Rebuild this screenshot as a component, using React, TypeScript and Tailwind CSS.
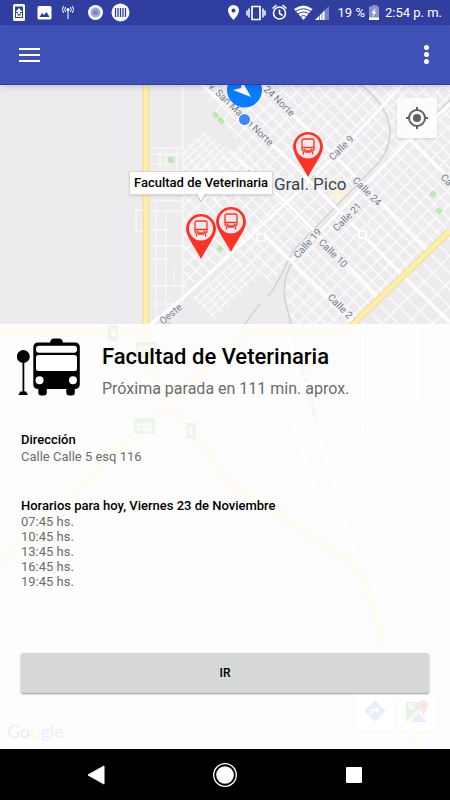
import React from "react";

const times = ["07:45 hs.", "10:45 hs.", "13:45 hs.", "16:45 hs.", "19:45 hs."];

const avenues = [
  "M150 325 183 298 300 190 350 141 402 85",
  "M292 260 410 139 450 104",
  "M203 85 260 134 290 161 403 276 450 322",
  "M262 85 343 164 427 251",
  "M240 160 290 206 378 297",
  "M265 235 290 260 353 321",
  "M410 139 450 179",
];

const highways = [
  "M146 85V324L145 345Q150 375 168 402",
  "M0 333H135L146 330",
  "M168 402 0 565",
  "M168 402 225 352Q240 334 255 332L335 332Q350 330 358 319L450 231",
  "M168 402 222 472Q226 481 235 487L345 559Q358 566 362 578L388 655 420 749",
];

const streetLabels: [number, number, number, string][] = [
  [208, 87, 44, "v. San Martín Norte"],
  [263, 90, 44, "24 Norte"],
  [333, 161, -45, "Calle 9"],
  [352, 181, 45, "Calle 24"],
  [337, 232, -45, "Calle 21"],
  [298, 259, -48, "Calle 19"],
  [318, 243, 45, "Calle 10"],
  [327, 298, 45, "Calle 2"],
  [440, 178, 45, "Ca"],
  [163, 325, -40, "Oeste"],
];

const parks = [
  "M215 111l4 4-3 4-4-4z",
  "M220 116l5 5-3 4-5-5z",
  "M168 157h6v6h-6z",
  "M220 245l4 4-4 4-4-4z",
  "M249 169l4 4h-8z",
  "M433 190l4 4-4 4-4-4z",
  "M439 207l4 4-4 4-4-4z",
  "M314 175l4 4-4 4-4-4z",
  "M168 321l4 4-4 4-4-4z",
];

function MapCanvas() {
  return (
    <svg
      className="absolute inset-0 h-full w-full"
      viewBox="0 85 450 664"
      preserveAspectRatio="xMidYMin slice"
      fontFamily="Roboto, sans-serif"
      aria-hidden="true"
    >
      <defs>
        <pattern id="blocks" width="11" height="9" patternUnits="userSpaceOnUse" patternTransform="translate(290 160) rotate(45)">
          <path d="M0 .7H11M.7 0V9" stroke="#fcfbfc" strokeWidth="1.400" />
        </pattern>
        <pattern id="small" width="9" height="6" patternUnits="userSpaceOnUse" patternTransform="translate(230 150) rotate(-43)">
          <path d="M0 .7H9M.7 0V6" stroke="#fcfbfc" strokeWidth="1.200" />
        </pattern>
        <pattern id="wide" width="18" height="12" patternUnits="userSpaceOnUse" patternTransform="translate(403 276) rotate(45)">
          <path d="M0 .7H18M.7 0V12" stroke="#fcfbfc" strokeWidth="1.400" />
        </pattern>
      </defs>
      <rect y="85" width="450" height="664" fill="#eeebee" />

      <path d="M196 85H362Q392 115 389 152L300 245 290 258 273 284 262 275 230 260 183 290V172L215 160 240 145 228 128z" fill="url(#blocks)" />
      <path d="M183 152 203 131 240 155 250 172 215 205 183 175z" fill="url(#small)" />
      <path d="M192 298 236 257 262 275 215 320z" fill="url(#small)" />
      <path d="M362 85H450V236L355 324H290L284 290 300 250 389 158Q394 110 362 85z" fill="url(#blocks)" />
      <path d="M450 236V324H362z" fill="url(#wide)" />
      <path d="M323 180l14-6 14 16-6 12-8 2z" fill="#fbf1dc" opacity=".8" />

      <g fill="none" stroke="#f8f7f8" strokeWidth="1.500">
        <path d="M183 85V304M150 148H183M150 154H183M150 164H170M150 171H183M150 201H183M150 211H183M150 230H168M150 246H183M150 259H170M150 286H183M150 304H180M160 148V171M166 148V180M177 148V171M156 201V320M166 211V320M174 268V286" />
        <path d="M150 210H136V231H150" />
      </g>
      <path d="M257 234h8v7h-8z" fill="#eeebee" stroke="#fff" strokeWidth="1.500" />

      <g fill="none" stroke="#cfd3d6" strokeWidth="1.500">
        <path d="M361 85Q388 106 390 130Q391 148 378 163L292 252Q276 288 268 296M260 304 244 325M293 262Q282 276 285 300L291 324M450 100 293 256" />
      </g>
      <g fill="none" stroke="#fff" strokeWidth="3">
        {avenues.map((d) => (
          <path key={d} d={d} />
        ))}
      </g>
      <path d="M359 231h7v7h-7z" fill="#eeebee" stroke="#fff" strokeWidth="2" />

      <g fill="none" stroke="#fff" strokeWidth="1.500">
        <path d="M160 329H195L202 336 160 382M175 329V360L190 372M287 332 362 575M284 400 334 540M363 332V440H400V401M418 332V401H322M364 332H418M322 401V423H363M332 401V423M344 401V423M322 412H363M391 401V430" />
        <path d="M362 324 372 332 382 324M392 324 400 332 410 324" />
      </g>

      <g fill="none" strokeLinejoin="round">
        {highways.map((d) => (
          <path key={d} d={d} stroke="#f9da83" strokeWidth="6.500" />
        ))}
        {highways.map((d) => (
          <path key={d} d={d} stroke="#ffefae" strokeWidth="4.500" />
        ))}
      </g>

      <g fill="#bfe8b0">
        {parks.map((d) => (
          <path key={d} d={d} />
        ))}
      </g>

      <g fontSize="10" fill="#75808a" stroke="#f4f2f4" strokeWidth="2" paintOrder="stroke">
        {streetLabels.map(([x, y, angle, label]) => (
          <text key={label} transform={`translate(${x} ${y}) rotate(${angle})`}>
            {label}
          </text>
        ))}
        <text transform="translate(294 350) rotate(74)" fontSize="8">Camino A Aeropuerto</text>
      </g>

      <g fontSize="10" fontWeight="700" fill="#fff" textAnchor="middle">
        <path d="M108 325h10v16h-10zM136 342h21v16h-21zM134 418h21v16h-21zM186 423h10v16h-10z" fill="#7ab662" />
        <text x="113" y="337">4</text>
        <text x="146" y="354">101</text>
        <text x="144" y="431">102</text>
        <text x="191" y="435">1</text>
      </g>

      <text x="274" y="190" fontSize="17" fill="#36454f" stroke="#f4f2f4" strokeWidth="2" paintOrder="stroke">
        Gral. Pico
      </text>

      <circle cx="244.500" cy="119.500" r="6.500" fill="#fff" />
      <circle cx="244.500" cy="119.500" r="5.500" fill="#4285f4" />
      <circle cx="244.500" cy="90" r="17.500" fill="#0a7cff" />
      <path d="M233 90 251 97 242 81 241 88z" fill="#fff" />
    </svg>
  );
}

function Pin({ className, label }: { className: string; label: string }) {
  return (
    <button aria-label={label} className={`absolute h-[45px] w-[30px] ${className}`}>
      <svg viewBox="0 0 30 45" className="h-full w-full" aria-hidden="true">
        <path d="M15 0A15 15 0 0 1 30 15C30 22 22 32 15 45 8 32 0 22 0 15A15 15 0 0 1 15 0z" fill="#fb3427" />
        <circle cx="15" cy="14.500" r="12" fill="#f3e7e9" />
        <g fill="none" stroke="#fb3427" strokeWidth="1.300">
          <rect x="9" y="7" width="12" height="12" rx="1.500" />
          <path d="M9 15.500H21M10.500 20v2.500M19.500 20v2.500M12 20h6" />
          <path d="M10.500 17.300h2M17.500 17.300h2" />
        </g>
      </svg>
    </button>
  );
}

function StatusBar() {
  return (
    <div className="flex h-[25px] items-center justify-between bg-[#303f9f] pr-2 pl-3 text-white">
      <svg width="120" height="20" viewBox="12 3 120 20" fill="#fff" aria-hidden="true">
        <path fillRule="evenodd" d="M14.500 4h9a1.500 1.500 0 0 1 1.500 1.500v14a1.500 1.500 0 0 1-1.500 1.500h-9a1.500 1.500 0 0 1-1.500-1.500v-14A1.500 1.500 0 0 1 14.500 4zM15 6.500v11.500h8V6.500zM19 8l3.500 4H20v2h-2v-2h-2.500zM16 13h1.500v2.500h3V13H22v4h-6z" />
        <path fillRule="evenodd" d="M39 6h11a1.500 1.500 0 0 1 1.500 1.500v10.500a1.500 1.500 0 0 1-1.500 1.500H39a1.500 1.500 0 0 1-1.500-1.500V7.500A1.500 1.500 0 0 1 39 6zM39.500 17h10l-3-5-2.500 3-2-2z" />
        <circle cx="68" cy="9.500" r="1.500" />
        <path d="M67.500 10h1v9h-1z" />
        <path d="M65.500 7q-1.500 2.500 0 5M63.500 6q-2 3.500 0 7M70.500 7q1.500 2.500 0 5M72.500 6q2 3.500 0 7" fill="none" stroke="#fff" />
        <circle cx="95.500" cy="12.500" r="7.500" />
        <circle cx="95.500" cy="12.500" r="5" fill="#9fa6d8" />
        <circle cx="95.500" cy="12.500" r="2.500" fill="#7c84c4" />
        <circle cx="120.500" cy="12.500" r="9" />
        <path d="M115.500 8v9M118 8v9M120.500 8v9M123 8v9M125.500 8v9" stroke="#303f9f" strokeWidth="1.300" />
      </svg>
      <div className="flex items-center">
        <svg width="104" height="20" viewBox="226 3 104 20" fill="#fff" aria-hidden="true">
          <path fillRule="evenodd" d="M233.500 5a5.500 5.500 0 0 1 5.500 5.500c0 4-5.500 9.500-5.500 9.500s-5.500-5.500-5.500-9.500a5.500 5.500 0 0 1 5.500-5.500zM233.500 8.500a2 2 0 1 0 0 4 2 2 0 0 0 0-4z" />
          <path d="M252 6.500h8v13h-8z" fill="none" stroke="#fff" strokeWidth="1.700" />
          <path d="M249 8.500v9M247 10.500v5M263 8.500v9M265 10.500v5" stroke="#fff" strokeWidth="1.500" />
          <g fill="none" stroke="#fff" strokeWidth="1.600">
            <circle cx="279.500" cy="13" r="6" />
            <path d="M279.500 9.500V13.500l3 2M272.500 8.500l4-3.500M286.500 8.500l-4-3.500" />
          </g>
          <path d="M294 9q9.500-7 18.500 0L303.500 20z" />
          <path d="M295.500 11.500q8-5.500 15.500 0M298 14q5.500-4 11 0M300.500 16.500q3-2 6 0" fill="none" stroke="#303f9f" strokeWidth="1" />
          <path d="M315 20 329 6V20z" opacity=".35" />
          <path d="M315 20 324.500 10.500V20z" />
          <path d="M319.500 13v7M322 11v9" stroke="#303f9f" strokeWidth=".6" />
        </svg>
        <span className="ml-2 text-[13px] leading-5">19 %</span>
        <svg className="ml-1" width="11" height="20" viewBox="369 3 11 20" aria-hidden="true">
          <path d="M372 5h5v1.500h2V20h-10V6.500h3z" fill="#8a92cc" />
          <path d="M369 17.500h10V20h-10zM375.500 8l-4 5h2l-1 4 4-5h-2z" fill="#fff" />
        </svg>
        <span className="ml-[5px] text-[13px] leading-5">2:54 p. m.</span>
      </div>
    </div>
  );
}

function BusStopIcon() {
  return (
    <svg width="64" height="58" viewBox="17 338 64 58" className="shrink-0" aria-hidden="true">
      <circle cx="23.300" cy="356.500" r="6.500" />
      <path d="M22.500 360h1.800v31.500h1.700l2 3.500H18.300l2-3.500h2.200z" />
      <path d="M50 344q0-5.500 4-5.500h5q4 0 4 5.500z" />
      <rect x="33.300" y="342.500" width="46.500" height="46.500" rx="4.500" />
      <rect x="38.300" y="385" width="8.500" height="10.500" rx="3" />
      <rect x="66.300" y="385" width="8.500" height="10.500" rx="3" />
      <g fill="#fff">
        <rect x="36" y="345.800" width="41" height="7" rx="3" />
        <rect x="36" y="355" width="41" height="16" rx="2.500" />
        <circle cx="39.500" cy="380.300" r="4" />
        <circle cx="73" cy="380.300" r="4" />
      </g>
    </svg>
  );
}

export default function App() {
  return (
    <div className="flex min-h-screen flex-col overflow-hidden bg-white font-[Roboto,'Noto_Sans',sans-serif]">
      <StatusBar />
      <header className="relative z-10 flex h-[60px] items-center justify-between border-b border-[#2440b5] bg-[#3f51b5] pr-[21px] pl-[19px] shadow-md">
        <button aria-label="Abrir menú" className="flex w-[21px] flex-col gap-1">
          <span className="h-[2px] w-full bg-white" />
          <span className="h-[2px] w-full bg-white" />
          <span className="h-[2px] w-full bg-white" />
        </button>
        <button aria-label="Más opciones" className="flex flex-col gap-[2px]">
          <span className="h-[5px] w-[5px] rounded-full bg-white" />
          <span className="h-[5px] w-[5px] rounded-full bg-white" />
          <span className="h-[5px] w-[5px] rounded-full bg-white" />
        </button>
      </header>

      <main className="relative flex flex-1 flex-col">
        <div className="absolute inset-0 overflow-hidden">
          <MapCanvas />
          <Pin className="top-[47px] left-[293px]" label="Parada centro" />
          <Pin className="top-[122px] left-[216px]" label="Parada Calle 7" />
          <Pin className="top-[129px] left-[186px]" label="Facultad de Veterinaria" />
          <div className="absolute top-[86px] left-[129px] border border-[#d8d8d8] bg-white px-1 text-[13px] leading-[22px] font-medium whitespace-nowrap text-black shadow-sm">
            Facultad de Veterinaria
            <svg className="absolute top-full left-[66px]" width="10" height="9" viewBox="0 0 10 9" aria-hidden="true">
              <path d="M0-1 5 8 10-1" fill="#fff" stroke="#bdbdbd" />
            </svg>
          </div>
          <button aria-label="Mi ubicación" className="absolute top-[13px] right-[13px] flex h-10 w-10 items-center justify-center rounded-xs bg-white/80 shadow">
            <svg width="24" height="24" viewBox="0 0 24 24" fill="none" stroke="#616161" strokeWidth="2" aria-hidden="true">
              <circle cx="12" cy="12" r="8" />
              <circle cx="12" cy="12" r="4" fill="#616161" stroke="none" />
              <path d="M12 1v3M12 20v3M1 12h3M20 12h3" />
            </svg>
          </button>
          <div className="absolute right-[13px] bottom-[18px] flex h-10 bg-white/70 shadow">
            <a href="#directions" aria-label="Cómo llegar" className="flex w-[41px] items-center justify-center border-r border-gray-300">
              <svg width="22" height="22" viewBox="0 0 22 22" aria-hidden="true">
                <path d="M11 1 21 11 11 21 1 11z" fill="#4285f4" stroke="#4285f4" strokeLinejoin="round" />
                <path d="M7.500 14.500V10h5" fill="none" stroke="#fff" strokeWidth="2" />
                <path d="M12 6.500 16 10l-4 3.500z" fill="#fff" />
              </svg>
            </a>
            <a href="#maps" aria-label="Abrir en Google Maps" className="flex w-[41px] items-center justify-center">
              <svg width="24" height="24" viewBox="0 0 24 24" aria-hidden="true">
                <path d="M1 3h14v8L1 22z" fill="#34a05a" />
                <path d="M12 13 22 23H2z" fill="#4285f4" />
                <path d="M13 10 1 22v2h3L15 13z" fill="#fdd835" />
                <path d="M15 12l7-1v12z" fill="#ddd" />
                <path d="M18.500 1a5 5 0 0 1 5 5c0 4-4 5-5 12-1-7-5-8-5-12a5 5 0 0 1 5-5z" fill="#e04a3f" />
                <circle cx="18.500" cy="6" r="1.800" fill="#8c2a22" />
                <path d="M8 5.500a2.500 2.500 0 1 0 .5 2H6" fill="none" stroke="#fff" strokeWidth="1.200" />
              </svg>
            </a>
          </div>
          <span className="absolute bottom-[6px] left-[7px] font-[Lato,sans-serif] text-[18px] leading-6 font-medium">
            <span className="text-[#4285f4]">G</span>
            <span className="text-[#ea4335]">o</span>
            <span className="text-[#fbbc05]">o</span>
            <span className="text-[#4285f4]">g</span>
            <span className="text-[#34a853]">l</span>
            <span className="text-[#ea4335]">e</span>
          </span>
        </div>

        <div className="h-[239px] shrink-0" />
        <section className="relative flex flex-1 flex-col bg-white/87 text-[13px] leading-[15px] text-[#6c6c6c]">
          <div className="flex items-start gap-[21px] pt-[14px] pl-[17px]">
            <BusStopIcon />
            <div className="pt-[5px]">
              <h1 className="text-[22px] leading-7 font-medium text-black">Facultad de Veterinaria</h1>
              <p className="mt-[6px] text-[16px] leading-6">Próxima parada en 111 min. aprox.</p>
            </div>
          </div>
          <div className="mt-[31px] px-[21px]">
            <h2 className="leading-4 font-medium text-black">Dirección</h2>
            <p className="mt-[1px] leading-4">Calle Calle 5 esq 116</p>
          </div>
          <div className="mt-[33px] px-[21px]">
            <h2 className="leading-4 font-medium text-black">Horarios para hoy, Viernes 23 de Noviembre</h2>
            <ul>
              {times.map((time) => (
                <li key={time}>{time}</li>
              ))}
            </ul>
          </div>
          <div className="mt-auto px-[21px] pb-[56px]">
            <button className="h-10 w-full rounded-xs bg-[#d6d7d7] text-[12px] font-medium text-black shadow-[0_1px_2px_#0006]">
              IR
            </button>
          </div>
        </section>
      </main>

      <nav aria-label="Navegación del sistema" className="grid h-[51px] grid-cols-[1fr_24px_1fr] items-center bg-black">
        <button aria-label="Atrás" className="mr-[108px] justify-self-end">
          <svg width="18" height="20" viewBox="0 0 18 20" fill="#fff" stroke="#fff" strokeLinejoin="round" aria-hidden="true">
            <path d="M17 1V19L1 10z" />
          </svg>
        </button>
        <button aria-label="Inicio">
          <svg width="24" height="24" viewBox="0 0 24 24" aria-hidden="true">
            <circle cx="12" cy="12" r="11.300" fill="none" stroke="#fff" strokeWidth="1.300" />
            <circle cx="12" cy="12" r="8.800" fill="#fff" />
          </svg>
        </button>
        <button aria-label="Recientes" className="ml-[109px] h-4 w-4 rounded-[1px] bg-white" />
      </nav>
    </div>
  );
}
